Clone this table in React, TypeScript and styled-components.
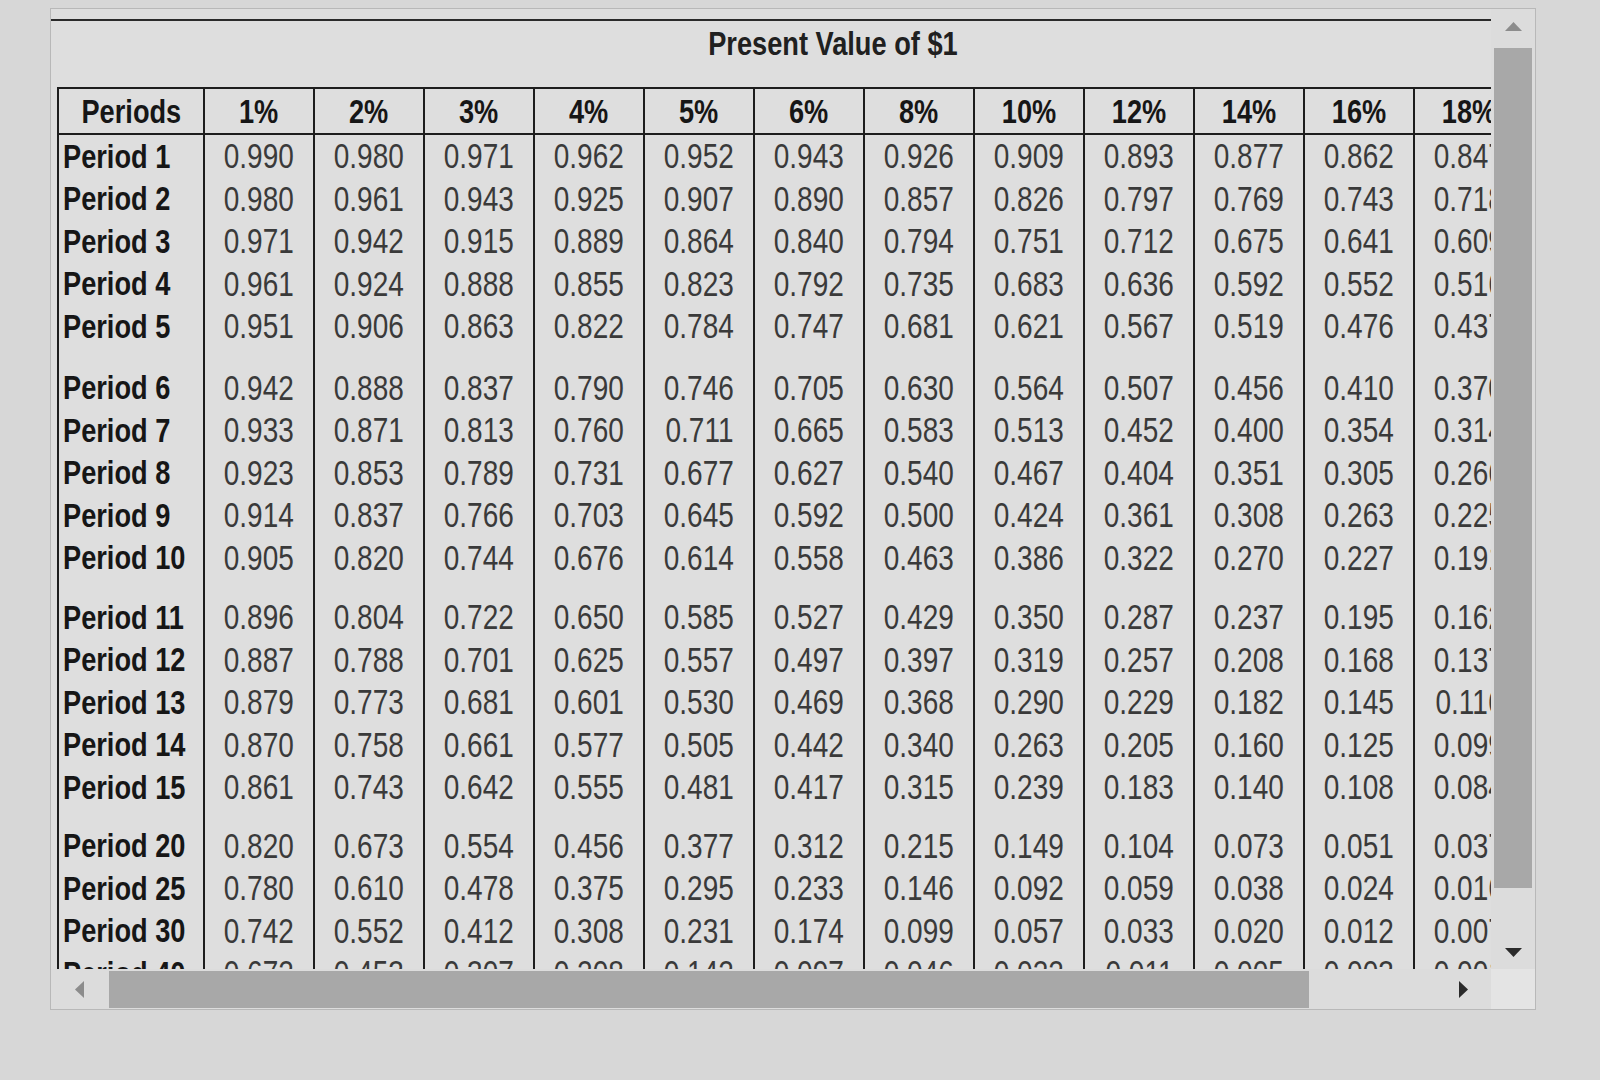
import React from "react";
import styled, { createGlobalStyle } from "styled-components";

const FONT = `"Liberation Sans", Arial, sans-serif`;

const colors = {
  page: "#d7d7d7",
  panel: "#dedede",
  line: "#1d1d1d",
  ink: "#161616",
  value: "#3a3a3a",
  thumb: "#a8a8a8",
  arrowOff: "#8c8c8c",
  arrowOn: "#2b2b2b",
};

const LABEL_COL = 146;
const RATE_COL = 110;

const GlobalStyle = createGlobalStyle`
  html, body {
    margin: 0;
    padding: 0;
    background: ${colors.page};
  }
  body {
    font-family: ${FONT};
    width: 1600px;
    height: 1080px;
    overflow: hidden;
  }
`;

const rates = ["1%", "2%", "3%", "4%", "5%", "6%", "8%", "10%", "12%", "14%", "16%", "18%", "20%"];

interface rowData {
  label: string;
  values: string[];
}

interface groupData {
  gapBefore: number;
  rows: rowData[];
}

const row = (label: string, v: string): rowData => ({ label, values: v.split(" ") });

const groups: groupData[] = [
  {
    gapBefore: 0,
    rows: [
      row("Period 1", "0.990 0.980 0.971 0.962 0.952 0.943 0.926 0.909 0.893 0.877 0.862 0.847 0.833"),
      row("Period 2", "0.980 0.961 0.943 0.925 0.907 0.890 0.857 0.826 0.797 0.769 0.743 0.718 0.694"),
      row("Period 3", "0.971 0.942 0.915 0.889 0.864 0.840 0.794 0.751 0.712 0.675 0.641 0.609 0.579"),
      row("Period 4", "0.961 0.924 0.888 0.855 0.823 0.792 0.735 0.683 0.636 0.592 0.552 0.516 0.482"),
      row("Period 5", "0.951 0.906 0.863 0.822 0.784 0.747 0.681 0.621 0.567 0.519 0.476 0.437 0.402"),
    ],
  },
  {
    gapBefore: 19,
    rows: [
      row("Period 6", "0.942 0.888 0.837 0.790 0.746 0.705 0.630 0.564 0.507 0.456 0.410 0.370 0.335"),
      row("Period 7", "0.933 0.871 0.813 0.760 0.711 0.665 0.583 0.513 0.452 0.400 0.354 0.314 0.279"),
      row("Period 8", "0.923 0.853 0.789 0.731 0.677 0.627 0.540 0.467 0.404 0.351 0.305 0.266 0.233"),
      row("Period 9", "0.914 0.837 0.766 0.703 0.645 0.592 0.500 0.424 0.361 0.308 0.263 0.225 0.194"),
      row("Period 10", "0.905 0.820 0.744 0.676 0.614 0.558 0.463 0.386 0.322 0.270 0.227 0.191 0.162"),
    ],
  },
  {
    gapBefore: 17,
    rows: [
      row("Period 11", "0.896 0.804 0.722 0.650 0.585 0.527 0.429 0.350 0.287 0.237 0.195 0.162 0.135"),
      row("Period 12", "0.887 0.788 0.701 0.625 0.557 0.497 0.397 0.319 0.257 0.208 0.168 0.137 0.112"),
      row("Period 13", "0.879 0.773 0.681 0.601 0.530 0.469 0.368 0.290 0.229 0.182 0.145 0.116 0.093"),
      row("Period 14", "0.870 0.758 0.661 0.577 0.505 0.442 0.340 0.263 0.205 0.160 0.125 0.099 0.078"),
      row("Period 15", "0.861 0.743 0.642 0.555 0.481 0.417 0.315 0.239 0.183 0.140 0.108 0.084 0.065"),
    ],
  },
  {
    gapBefore: 16,
    rows: [
      row("Period 20", "0.820 0.673 0.554 0.456 0.377 0.312 0.215 0.149 0.104 0.073 0.051 0.037 0.026"),
      row("Period 25", "0.780 0.610 0.478 0.375 0.295 0.233 0.146 0.092 0.059 0.038 0.024 0.016 0.010"),
      row("Period 30", "0.742 0.552 0.412 0.308 0.231 0.174 0.099 0.057 0.033 0.020 0.012 0.007 0.004"),
      row("Period 40", "0.672 0.453 0.307 0.208 0.142 0.097 0.046 0.022 0.011 0.005 0.003 0.001 0.001"),
    ],
  },
];

const Page = styled.div`
  padding: 8px 0 0 50px;
`;

const Panel = styled.div`
  width: 1486px;
  height: 1002px;
  box-sizing: border-box;
  border: 1px solid #b8b8b8;
  background: ${colors.panel};
  display: grid;
  grid-template-columns: 1fr 44px;
  grid-template-rows: 1fr 40px;
`;

const Viewport = styled.div`
  overflow: hidden;
  padding-top: 10px;
  box-sizing: border-box;
`;

const Content = styled.div`
  width: max-content;
`;

const TopRule = styled.div`
  border-top: 2px solid #2a2a2a;
`;

const Title = styled.h1`
  margin: 0;
  height: 66px;
  box-sizing: border-box;
  padding-top: 5px;
  padding-right: 20px;
  text-align: center;
  font-size: 34px;
  line-height: 34px;
  font-weight: 700;
  color: #202020;
`;

// the table face is condensed, squeeze the regular face to match
const Narrow = styled.span<{ $origin: "left" | "center" }>`
  display: inline-block;
  transform: scaleX(0.8);
  transform-origin: ${(p) => p.$origin} center;
`;

const Table = styled.table`
  width: ${LABEL_COL + RATE_COL * rates.length}px;
  margin-left: 6px;
  border-collapse: collapse;
  table-layout: fixed;
  border-top: 2px solid ${colors.line};
  border-left: 2px solid ${colors.line};
  color: ${colors.value};
`;

const Col = styled.col<{ $w: number }>`
  width: ${(p) => p.$w}px;
`;

const HeadCell = styled.th`
  height: 44px;
  padding: 0;
  border-right: 2px solid ${colors.line};
  border-bottom: 2px solid ${colors.line};
  font-size: 34px;
  font-weight: 700;
  color: ${colors.ink};
  text-align: center;
  white-space: nowrap;
`;

const LabelCell = styled.td`
  height: 42.5px;
  padding: 0 0 0 4px;
  border-right: 2px solid ${colors.line};
  font-size: 34px;
  font-weight: 700;
  color: ${colors.ink};
  text-align: left;
  white-space: nowrap;
`;

const ValueCell = styled.td`
  height: 42.5px;
  padding: 0;
  border-right: 2px solid ${colors.line};
  font-size: 35px;
  font-weight: 400;
  text-align: center;
  white-space: nowrap;
`;

const SpacerCell = styled.td<{ $h: number }>`
  height: ${(p) => p.$h}px;
  padding: 0;
  border-right: 2px solid ${colors.line};
`;

const VBar = styled.div`
  display: flex;
  flex-direction: column;
  background: #dcdcdc;
`;

const ArrowButton = styled.div<{ $size: number }>`
  flex: 0 0 ${(p) => p.$size}px;
  display: flex;
  align-items: center;
  justify-content: center;
`;

const VTrack = styled.div`
  flex: 1;
  padding: 5px 3px 0 3px;
`;

const VThumb = styled.div`
  height: 840px;
  background: ${colors.thumb};
`;

const HBar = styled.div`
  display: flex;
  background: #dcdcdc;
`;

const HTrack = styled.div`
  flex: 1;
  padding: 2px 0 1px 2px;
`;

const HThumb = styled.div`
  width: 1200px;
  height: 100%;
  background: ${colors.thumb};
`;

const Corner = styled.div`
  background: #e4e4e4;
`;

type dir = "up" | "down" | "left" | "right";

const arrowShapes: Record<dir, { w: number; h: number; points: string }> = {
  up: { w: 17, h: 9, points: "0,9 8.5,0 17,9" },
  down: { w: 17, h: 9, points: "0,0 17,0 8.5,9" },
  left: { w: 9, h: 17, points: "9,0 9,17 0,8.5" },
  right: { w: 9, h: 17, points: "0,0 9,8.5 0,17" },
};

const Arrow: React.FC<{ direction: dir; active: boolean }> = ({ direction, active }) => {
  const s = arrowShapes[direction];
  return (
    <svg width={s.w} height={s.h} viewBox={`0 0 ${s.w} ${s.h}`}>
      <polygon points={s.points} fill={active ? colors.arrowOn : colors.arrowOff} />
    </svg>
  );
};

const App: React.FC = (): JSX.Element => {
  return (
    <Page>
      <GlobalStyle />
      <Panel>
        <Viewport>
          <Content>
            <TopRule />
            <Title>
              <Narrow $origin="center">Present Value of $1</Narrow>
            </Title>
            <Table>
              <colgroup>
                <Col $w={LABEL_COL} />
                {rates.map((r) => (
                  <Col key={r} $w={RATE_COL} />
                ))}
              </colgroup>
              <thead>
                <tr>
                  <HeadCell>
                    <Narrow $origin="center">Periods</Narrow>
                  </HeadCell>
                  {rates.map((r) => (
                    <HeadCell key={r}>
                      <Narrow $origin="center">{r}</Narrow>
                    </HeadCell>
                  ))}
                </tr>
              </thead>
              <tbody>
                {groups.map((g, gi) => (
                  <React.Fragment key={gi}>
                    {g.gapBefore > 0 && (
                      <tr>
                        <SpacerCell $h={g.gapBefore} />
                        {rates.map((r) => (
                          <SpacerCell key={r} $h={g.gapBefore} />
                        ))}
                      </tr>
                    )}
                    {g.rows.map((rw) => (
                      <tr key={rw.label}>
                        <LabelCell>
                          <Narrow $origin="left">{rw.label}</Narrow>
                        </LabelCell>
                        {rw.values.map((v, i) => (
                          <ValueCell key={i}>
                            <Narrow $origin="center">{v}</Narrow>
                          </ValueCell>
                        ))}
                      </tr>
                    ))}
                  </React.Fragment>
                ))}
              </tbody>
            </Table>
          </Content>
        </Viewport>
        <VBar>
          <ArrowButton $size={34}>
            <Arrow direction="up" active={false} />
          </ArrowButton>
          <VTrack>
            <VThumb />
          </VTrack>
          <ArrowButton $size={34}>
            <Arrow direction="down" active={true} />
          </ArrowButton>
        </VBar>
        <HBar>
          <ArrowButton $size={56}>
            <Arrow direction="left" active={false} />
          </ArrowButton>
          <HTrack>
            <HThumb />
          </HTrack>
          <ArrowButton $size={56}>
            <Arrow direction="right" active={true} />
          </ArrowButton>
        </HBar>
        <Corner />
      </Panel>
    </Page>
  );
};

export default App;
